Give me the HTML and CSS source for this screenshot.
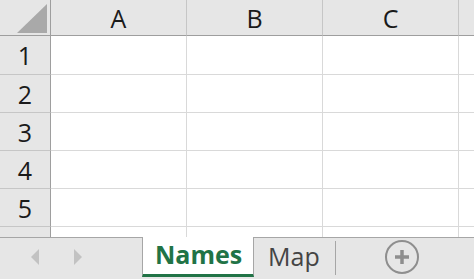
FILE: index.html
```html
<!DOCTYPE html>
<html lang="en">
<head>
    <meta charset="UTF-8">
    <title>Sheet</title>
    <link rel="stylesheet" href="styles.css">
</head>
<body>
    <div class="sheet">
        <div class="grid">
            <div class="corner">
                <svg width="50" height="36" viewBox="0 0 50 36"><polygon points="47,4 47,33 17,33" fill="#a9a9a9"/></svg>
            </div>
            <div class="colhead">A</div>
            <div class="colhead">B</div>
            <div class="colhead">C</div>
            <div class="colhead rest"></div>

            <div class="rowhead first">1</div><div class="cell first"></div><div class="cell first"></div><div class="cell first"></div><div class="cell first rest"></div>
            <div class="rowhead">2</div><div class="cell"></div><div class="cell"></div><div class="cell"></div><div class="cell rest"></div>
            <div class="rowhead">3</div><div class="cell"></div><div class="cell"></div><div class="cell"></div><div class="cell rest"></div>
            <div class="rowhead">4</div><div class="cell"></div><div class="cell"></div><div class="cell"></div><div class="cell rest"></div>
            <div class="rowhead">5</div><div class="cell"></div><div class="cell"></div><div class="cell"></div><div class="cell rest"></div>
            <!-- fila 6, casi oculta bajo la barra de hojas -->
            <div class="rowhead"></div><div class="cell"></div><div class="cell"></div><div class="cell"></div><div class="cell rest"></div>
        </div>
    </div>

    <div class="tabbar">
        <div class="nav">
            <svg width="9" height="16" viewBox="0 0 9 16"><polygon points="8,0 8,16 0,8" fill="#c2c2c2"/></svg>
            <svg width="9" height="16" viewBox="0 0 9 16"><polygon points="0,0 0,16 8,8" fill="#c2c2c2"/></svg>
        </div>
        <div class="tab active">Names</div>
        <div class="tab">Map</div>
        <div class="add">
            <svg width="36" height="36" viewBox="0 0 36 36">
                <circle cx="18" cy="18" r="16" fill="none" stroke="#8e8e8e" stroke-width="2"/>
                <path d="M18 11 V25 M11 18 H25" stroke="#8e8e8e" stroke-width="3.5"/>
            </svg>
        </div>
    </div>
</body>
</html>
```

FILE: styles.css
```css
* {
    box-sizing: border-box;
}

body {
    margin: 0;
    width: 474px;
    height: 279px;
    overflow: hidden;
    display: flex;
    flex-direction: column;
    font-family: 'Open Sans', sans-serif;
    background: #ffffff;
    color: #1a1a1a;
}

.sheet {
    flex: 1;
    overflow: hidden;
}

.grid {
    display: grid;
    grid-template-columns: 51px 136px 136px 136px 1fr;
    grid-template-rows: 36px 39px repeat(5, 38px);
}

.corner,
.colhead,
.rowhead {
    background: #e6e6e6;
    font-size: 25px;
    display: flex;
    align-items: center;
    justify-content: center;
}

.corner {
    border-right: 1px solid #9e9e9e;
    border-bottom: 1px solid #9e9e9e;
}

.corner svg {
    display: block;
}

.colhead {
    border-right: 1px solid #c6c6c6;
    border-bottom: 1px solid #9e9e9e;
}

.rowhead {
    border-right: 1px solid #9e9e9e;
    border-bottom: 1px solid #c6c6c6;
}

.cell {
    border-right: 1px solid #d9d9d9;
    border-bottom: 1px solid #d9d9d9;
}

.rest {
    border-right: none;
}

/* Barra de hojas */
.tabbar {
    height: 42px;
    display: flex;
    background: #e6e6e6;
    border-top: 1px solid #a6a6a6;
    font-size: 25px;
}

.nav {
    width: 142px;
    display: flex;
    align-items: center;
    gap: 34px;
    padding-left: 31px;
    padding-bottom: 4px;
}

.tab {
    display: flex;
    align-items: center;
    height: 39px;
    line-height: 1;
    padding-bottom: 2px;
}

.tab.active {
    width: 112px;
    margin-top: -1px;
    height: 40px;
    padding-left: 12px;
    background: #ffffff;
    color: #217346;
    font-weight: bold;
    border-left: 1px solid #a6a6a6;
    border-right: 1px solid #a6a6a6;
    border-bottom: 3px solid #217346;
}

.tab:not(.active) {
    width: 82px;
    padding-left: 14px;
    color: #444;
    position: relative;
}

.tab:not(.active)::after {
    content: '';
    position: absolute;
    right: 0;
    top: 3px;
    bottom: 2px;
    border-right: 1px solid #a6a6a6;
}

.add {
    flex: 1;
    display: flex;
    align-items: center;
    padding-left: 48px;
    padding-bottom: 4px;
}

.add svg {
    display: block;
}
```
